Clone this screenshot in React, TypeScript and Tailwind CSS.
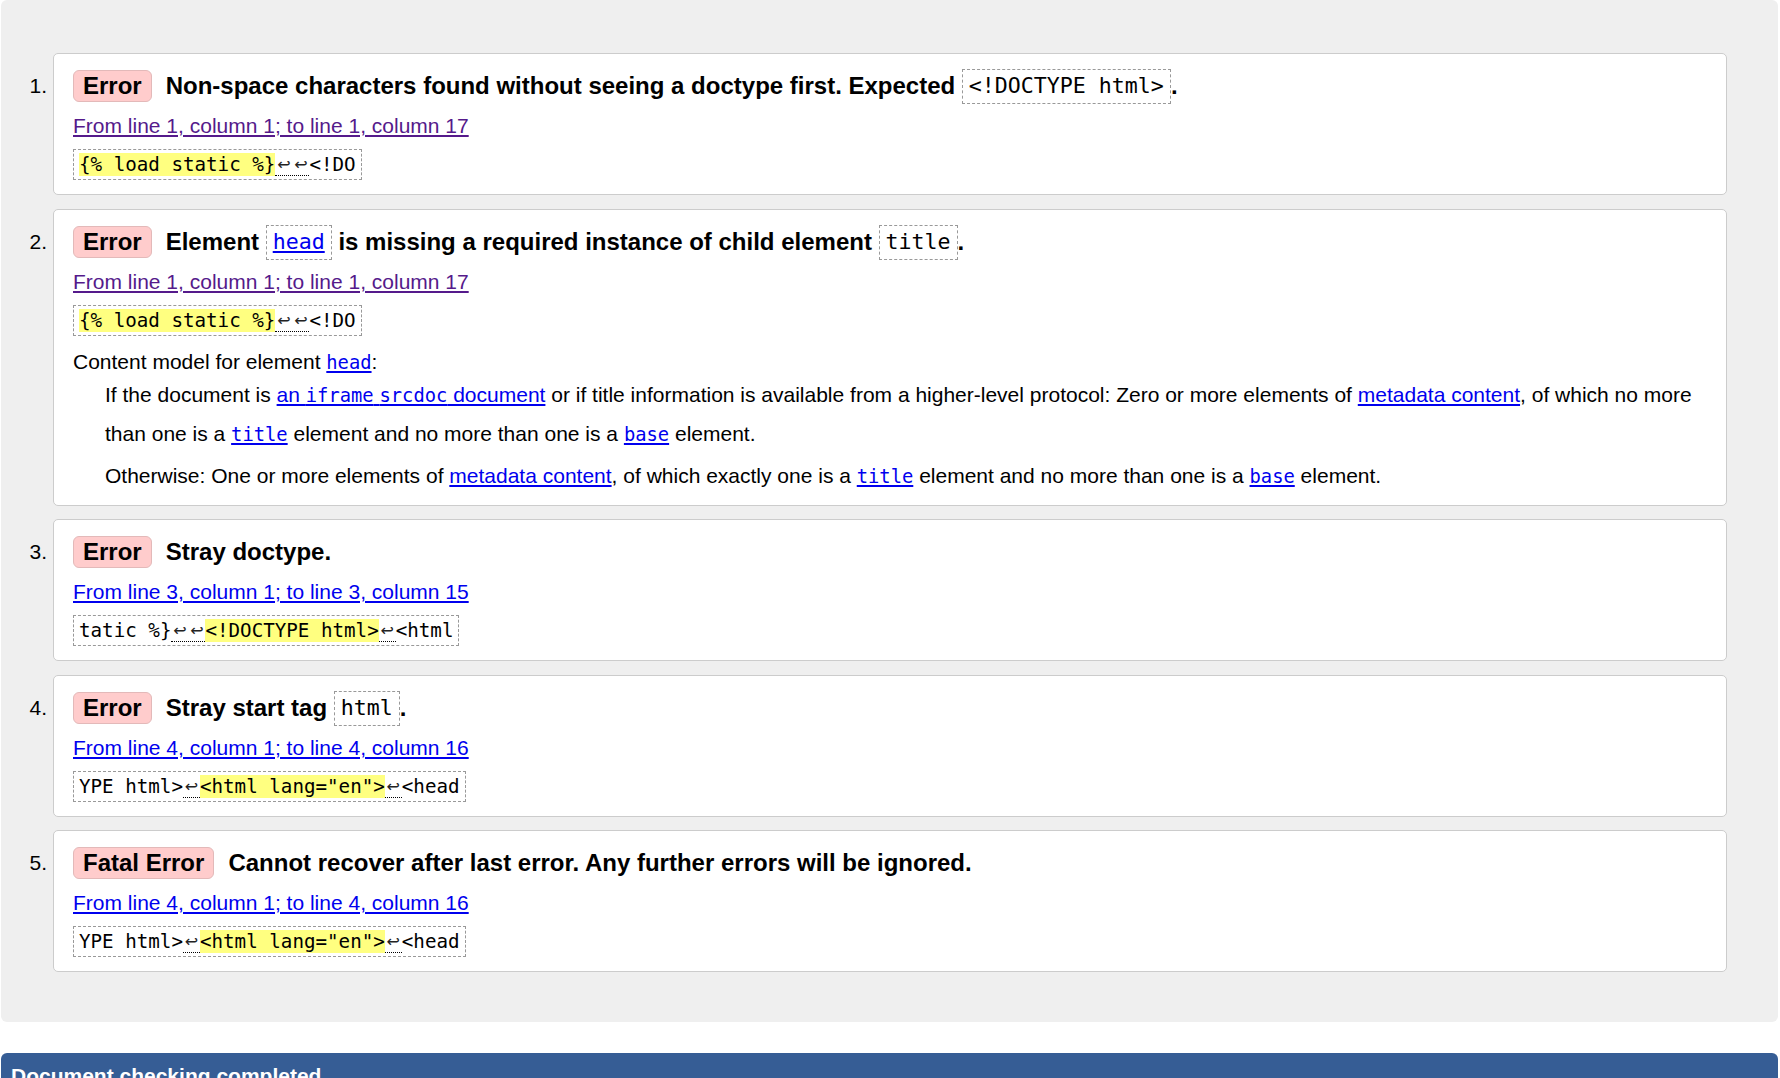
import React from "react";

const Arrows = ({ n }: { n: number }) => (
  <span className="inline-flex h-[23px] border-b border-dotted border-black">
    {Array.from({ length: n }).map((_, i) => (
      <span
        key={i}
        className="w-[17px] flex items-center justify-center font-['DejaVu_Sans',sans-serif] text-[16px] leading-[23px] text-[#222]"
      >
        ↩
      </span>
    ))}
  </span>
);

const Mark = ({ children }: { children: React.ReactNode }) => (
  <span className="bg-[#ffff80] h-[23px] leading-[23px]">{children}</span>
);

const Extract = ({ children }: { children: React.ReactNode }) => (
  <div className="mt-[11px] flex">
    <div className="inline-flex items-center border border-dashed border-[#999999] px-[5px] py-[3px] whitespace-pre font-['DejaVu_Sans_Mono',monospace] text-[19.2px] leading-[23px] text-black">
      {children}
    </div>
  </div>
);

const HCode = ({ children }: { children: React.ReactNode }) => (
  <span className="flex items-center h-[35px] border border-dashed border-[#999999] px-[6px] font-normal font-['DejaVu_Sans_Mono',monospace] text-[21.6px] leading-[28px]">
    {children}
  </span>
);

const PCode = ({ children }: { children: React.ReactNode }) => (
  <code className="font-['DejaVu_Sans_Mono',monospace] text-[18.8px] leading-[1]">{children}</code>
);

const Badge = ({ label }: { label: string }) => (
  <span className="flex items-center h-[32px] px-[9px] bg-[#ffcccc] border border-[#e3b9b9] rounded-[6px] text-[24px] font-bold leading-none shrink-0">
    {label}
  </span>
);

type CardProps = {
  n: number;
  badge: string;
  heading: React.ReactNode;
  link: string;
  visited?: boolean;
  extract: React.ReactNode;
  extra?: React.ReactNode;
  mt: string;
};

const Card = ({ n, badge, heading, link, visited, extract, extra, mt }: CardProps) => (
  <li className={`flex ${mt}`}>
    <div className="w-[52px] shrink-0 flex justify-end pr-[6px] pt-[15px]">
      <div className="h-[36px] flex items-center text-[21px]">{n}.</div>
    </div>
    <div
      className={`flex-1 bg-white border border-[#cccccc] rounded-[5px] px-[19px] pt-[14px] ${
        extra ? "pb-[10px]" : "pb-[14px]"
      }`}
    >
      <div className="flex items-center h-[36px]">
        <Badge label={badge} />
        <div className="ml-[14px] flex items-center whitespace-pre text-[24px] font-bold leading-[28px]">
          {heading}
        </div>
      </div>
      <div className="mt-[10px] text-[21px] leading-[24px]">
        <a
          href="#"
          className={`underline ${visited ? "text-[#551a8b]" : "text-[#0000ee]"}`}
        >
          {link}
        </a>
      </div>
      <Extract>{extract}</Extract>
      {extra}
    </div>
  </li>
);

export default function App() {
  const linkCls = "text-[#0000ee] underline";
  return (
    <div className="h-screen overflow-hidden bg-white text-black font-['Liberation_Sans',Arial,sans-serif]">
      <div className="ml-[1px] mr-[2px] bg-[#efefef] rounded-[6px] pt-[53px] pb-[50px] pr-[51px]">
        <ol className="flex flex-col">
          <Card
            n={1}
            mt="mt-0"
            badge="Error"
            visited
            link="From line 1, column 1; to line 1, column 17"
            heading={
              <>
                <span>Non-space characters found without seeing a doctype first. Expected </span>
                <HCode>&lt;!DOCTYPE html&gt;</HCode>
                <span>.</span>
              </>
            }
            extract={
              <>
                <Mark>{"{% load static %}"}</Mark>
                <Arrows n={2} />
                <span>&lt;!DO</span>
              </>
            }
          />
          <Card
            n={2}
            mt="mt-[14px]"
            badge="Error"
            visited
            link="From line 1, column 1; to line 1, column 17"
            heading={
              <>
                <span>Element </span>
                <HCode>
                  <a href="#" className="text-[#0000ee] underline">
                    head
                  </a>
                </HCode>
                <span> is missing a required instance of child element </span>
                <HCode>title</HCode>
                <span>.</span>
              </>
            }
            extract={
              <>
                <Mark>{"{% load static %}"}</Mark>
                <Arrows n={2} />
                <span>&lt;!DO</span>
              </>
            }
            extra={
              <div className="text-[21px]">
                <div className="mt-[14px] leading-[24px]">
                  Content model for element{" "}
                  <a href="#" className={linkCls}>
                    <PCode>head</PCode>
                  </a>
                  :
                </div>
                <div className="ml-[32px] mt-[1px]">
                  <p className="leading-[39px]">
                    If the document is{" "}
                    <a href="#" className={linkCls}>
                      an <PCode>iframe</PCode> <PCode>srcdoc</PCode> document
                    </a>{" "}
                    or if title information is available from a higher-level protocol: Zero or more
                    elements of{" "}
                    <a href="#" className={linkCls}>
                      metadata content
                    </a>
                    , of which no more
                    <br />
                    than one is a{" "}
                    <a href="#" className={linkCls}>
                      <PCode>title</PCode>
                    </a>{" "}
                    element and no more than one is a{" "}
                    <a href="#" className={linkCls}>
                      <PCode>base</PCode>
                    </a>{" "}
                    element.
                  </p>
                  <p className="mt-[3px] leading-[39px]">
                    Otherwise: One or more elements of{" "}
                    <a href="#" className={linkCls}>
                      metadata content
                    </a>
                    , of which exactly one is a{" "}
                    <a href="#" className={linkCls}>
                      <PCode>title</PCode>
                    </a>{" "}
                    element and no more than one is a{" "}
                    <a href="#" className={linkCls}>
                      <PCode>base</PCode>
                    </a>{" "}
                    element.
                  </p>
                </div>
              </div>
            }
          />
          <Card
            n={3}
            mt="mt-[13px]"
            badge="Error"
            link="From line 3, column 1; to line 3, column 15"
            heading={<span>Stray doctype.</span>}
            extract={
              <>
                <span>tatic %{"}"}</span>
                <Arrows n={2} />
                <Mark>&lt;!DOCTYPE html&gt;</Mark>
                <Arrows n={1} />
                <span>&lt;html</span>
              </>
            }
          />
          <Card
            n={4}
            mt="mt-[14px]"
            badge="Error"
            link="From line 4, column 1; to line 4, column 16"
            heading={
              <>
                <span>Stray start tag </span>
                <HCode>html</HCode>
                <span>.</span>
              </>
            }
            extract={
              <>
                <span>YPE html&gt;</span>
                <Arrows n={1} />
                <Mark>&lt;html lang="en"&gt;</Mark>
                <Arrows n={1} />
                <span>&lt;head</span>
              </>
            }
          />
          <Card
            n={5}
            mt="mt-[13px]"
            badge="Fatal Error"
            link="From line 4, column 1; to line 4, column 16"
            heading={<span>Cannot recover after last error. Any further errors will be ignored.</span>}
            extract={
              <>
                <span>YPE html&gt;</span>
                <Arrows n={1} />
                <Mark>&lt;html lang="en"&gt;</Mark>
                <Arrows n={1} />
                <span>&lt;head</span>
              </>
            }
          />
        </ol>
      </div>
      <div className="mt-[31px] ml-[1px] mr-[2px] bg-[#365d95] rounded-t-[6px] px-[10px] pt-[11px] pb-[14px] text-white font-bold text-[21px] leading-[24px]">
        Document checking completed.
      </div>
    </div>
  );
}
